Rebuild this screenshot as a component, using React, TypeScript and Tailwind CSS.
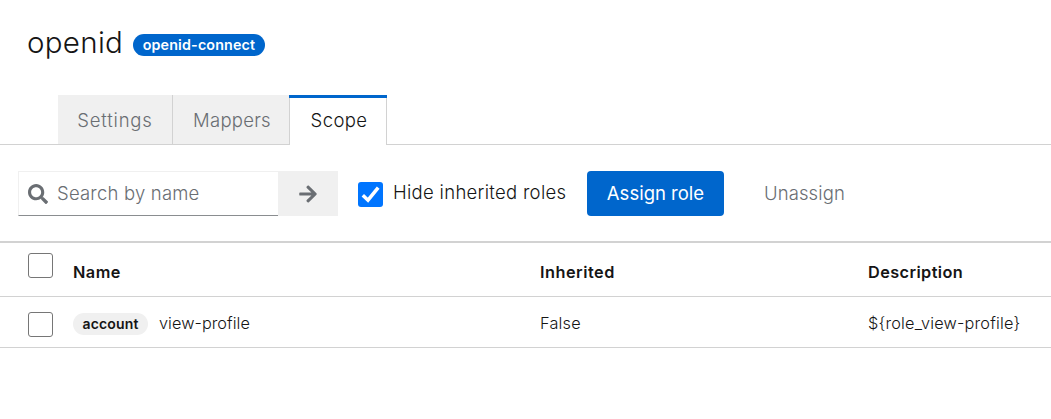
function SearchIcon() {
  return (
    <svg viewBox="0 0 512 512" className="h-5 w-5 shrink-0" fill="#6a6e73" aria-hidden="true">
      <path d="M505 442.7L405.3 343c-4.5-4.5-10.6-7-17-7H372c27.6-35.3 44-79.7 44-128C416 93.1 322.9 0 208 0S0 93.1 0 208s93.1 208 208 208c48.3 0 92.7-16.4 128-44v16.3c0 6.4 2.5 12.5 7 17l99.7 99.7c9.4 9.4 24.6 9.4 33.9 0l28.3-28.3c9.4-9.4 9.4-24.6.1-34zM208 336c-70.7 0-128-57.2-128-128 0-70.7 57.2-128 128-128 70.7 0 128 57.2 128 128 0 70.7-57.2 128-128 128z" />
    </svg>
  );
}

function ArrowIcon() {
  return (
    <svg viewBox="0 0 448 512" className="h-5 w-[18px]" fill="#6a6e73" aria-hidden="true">
      <path d="M190.5 66.9l22.2-22.2c9.4-9.4 24.6-9.4 33.9 0L441 239c9.4 9.4 9.4 24.6 0 33.9L246.6 467.3c-9.4 9.4-24.6 9.4-33.9 0l-22.2-22.2c-9.5-9.5-9.3-25 .4-34.3L311.4 296H24c-13.3 0-24-10.7-24-24v-32c0-13.3 10.7-24 24-24h287.4L190.9 101.2c-9.8-9.3-10-24.8-.4-34.3z" />
    </svg>
  );
}

function EmptyCheckbox() {
  return (
    <button
      role="checkbox"
      aria-checked="false"
      className="block h-[25px] w-[25px] rounded-[3px] border-[1.5px] border-[#767676] bg-white"
    />
  );
}

const columns = "grid grid-cols-[45px_467px_328px_1fr] pl-7";

export default function App() {
  return (
    <main className="h-[419px] overflow-hidden whitespace-nowrap bg-white font-['Inter',sans-serif] text-[18.5px] font-light text-[#151515]">
      <header className="flex h-[95px] items-start pl-[27px] pt-[25px]">
        <h1 className="w-[106px] text-[29.5px] leading-[34px] tracking-[0.3px]">openid</h1>
        <span className="mt-[9px] flex h-[22px] w-[132px] items-center justify-center rounded-full bg-[#0066cc] text-[14.3px] font-semibold tracking-[0.15px] text-white">
          openid-connect
        </span>
      </header>

      <nav className="flex h-[50px] text-[#6a6e73]">
        <div className="w-[58px] border-b border-[#d2d2d2]" />
        <button className="w-[115px] border-b border-r border-[#d2d2d2] bg-[#f0f0f0] pt-[3px] tracking-[0.8px]">
          Settings
        </button>
        <button className="w-[116px] border-b border-[#d2d2d2] bg-[#f0f0f0] pl-0.5 pt-[3px] tracking-[0.25px]">
          Mappers
        </button>
        <button className="flex w-[98px] flex-col bg-white text-[#151515]">
          <span className="h-[3px] w-full bg-[#0066cc]" />
          <span className="flex w-full flex-1 items-center justify-center border-x border-[#d2d2d2] pb-0.5 pl-0.5 tracking-[0.4px]">
            Scope
          </span>
        </button>
        <div className="flex-1 border-b border-[#d2d2d2]" />
      </nav>

      <section className="flex h-24 items-start pl-[18px] pt-[26px]">
        <div className="flex h-[45px] w-[260px] items-center border border-r-0 border-[#f0f0f0] border-b-[#8a8d90] pl-[9px] text-[#6a6e73]">
          <SearchIcon />
          <span className="ml-[9px] tracking-[0.2px]">Search by name</span>
        </div>
        <button aria-label="Search" className="flex h-[45px] w-[60px] items-center justify-center bg-[#f0f0f0]">
          <ArrowIcon />
        </button>
        <button
          role="checkbox"
          aria-checked="true"
          className="ml-5 mt-[11px] flex h-[25px] w-[25px] items-center justify-center rounded-[3px] bg-[#0075ff]"
        >
          <svg viewBox="0 0 25 25" className="h-[25px] w-[25px]" fill="none" stroke="white" strokeWidth="3.5" aria-hidden="true">
            <path d="M4.8 13.3L10 18.2L20.2 5.6" />
          </svg>
        </button>
        <span className="ml-[10px] w-[194px] leading-[43px] tracking-[0.3px]">Hide inherited roles</span>
        <button className="h-[45px] w-[137px] rounded-[4px] bg-[#0066cc] font-normal text-white">Assign role</button>
        <span className="ml-10 leading-[45px] tracking-[0.1px] text-[#6a6e73]">Unassign</span>
      </section>

      <section className="border-t-2 border-[#d2d2d2] text-[16.3px]">
        <div className={`${columns} h-[54px] border-b border-[#d2d2d2] font-semibold leading-[58px]`}>
          <div className="pt-2.5">
            <EmptyCheckbox />
          </div>
          <div className="tracking-[0.5px]">Name</div>
          <div className="tracking-[0.5px]">Inherited</div>
          <div className="tracking-[0.4px]">Description</div>
        </div>
        <div className={`${columns} h-[51px] border-b border-[#d2d2d2] leading-[52px]`}>
          <div className="pt-[15px]">
            <EmptyCheckbox />
          </div>
          <div className="flex items-start">
            <span className="mt-4 flex h-[22px] w-[75px] items-center justify-center rounded-full bg-[#f0f0f0] text-[14px] font-semibold tracking-[0.15px]">
              account
            </span>
            <span className="ml-[11px] tracking-[0.05px]">view-profile</span>
          </div>
          <div className="tracking-[0.2px]">False</div>
          <div className="tracking-[0.2px]">{"${role_view-profile}"}</div>
        </div>
      </section>
    </main>
  );
}
